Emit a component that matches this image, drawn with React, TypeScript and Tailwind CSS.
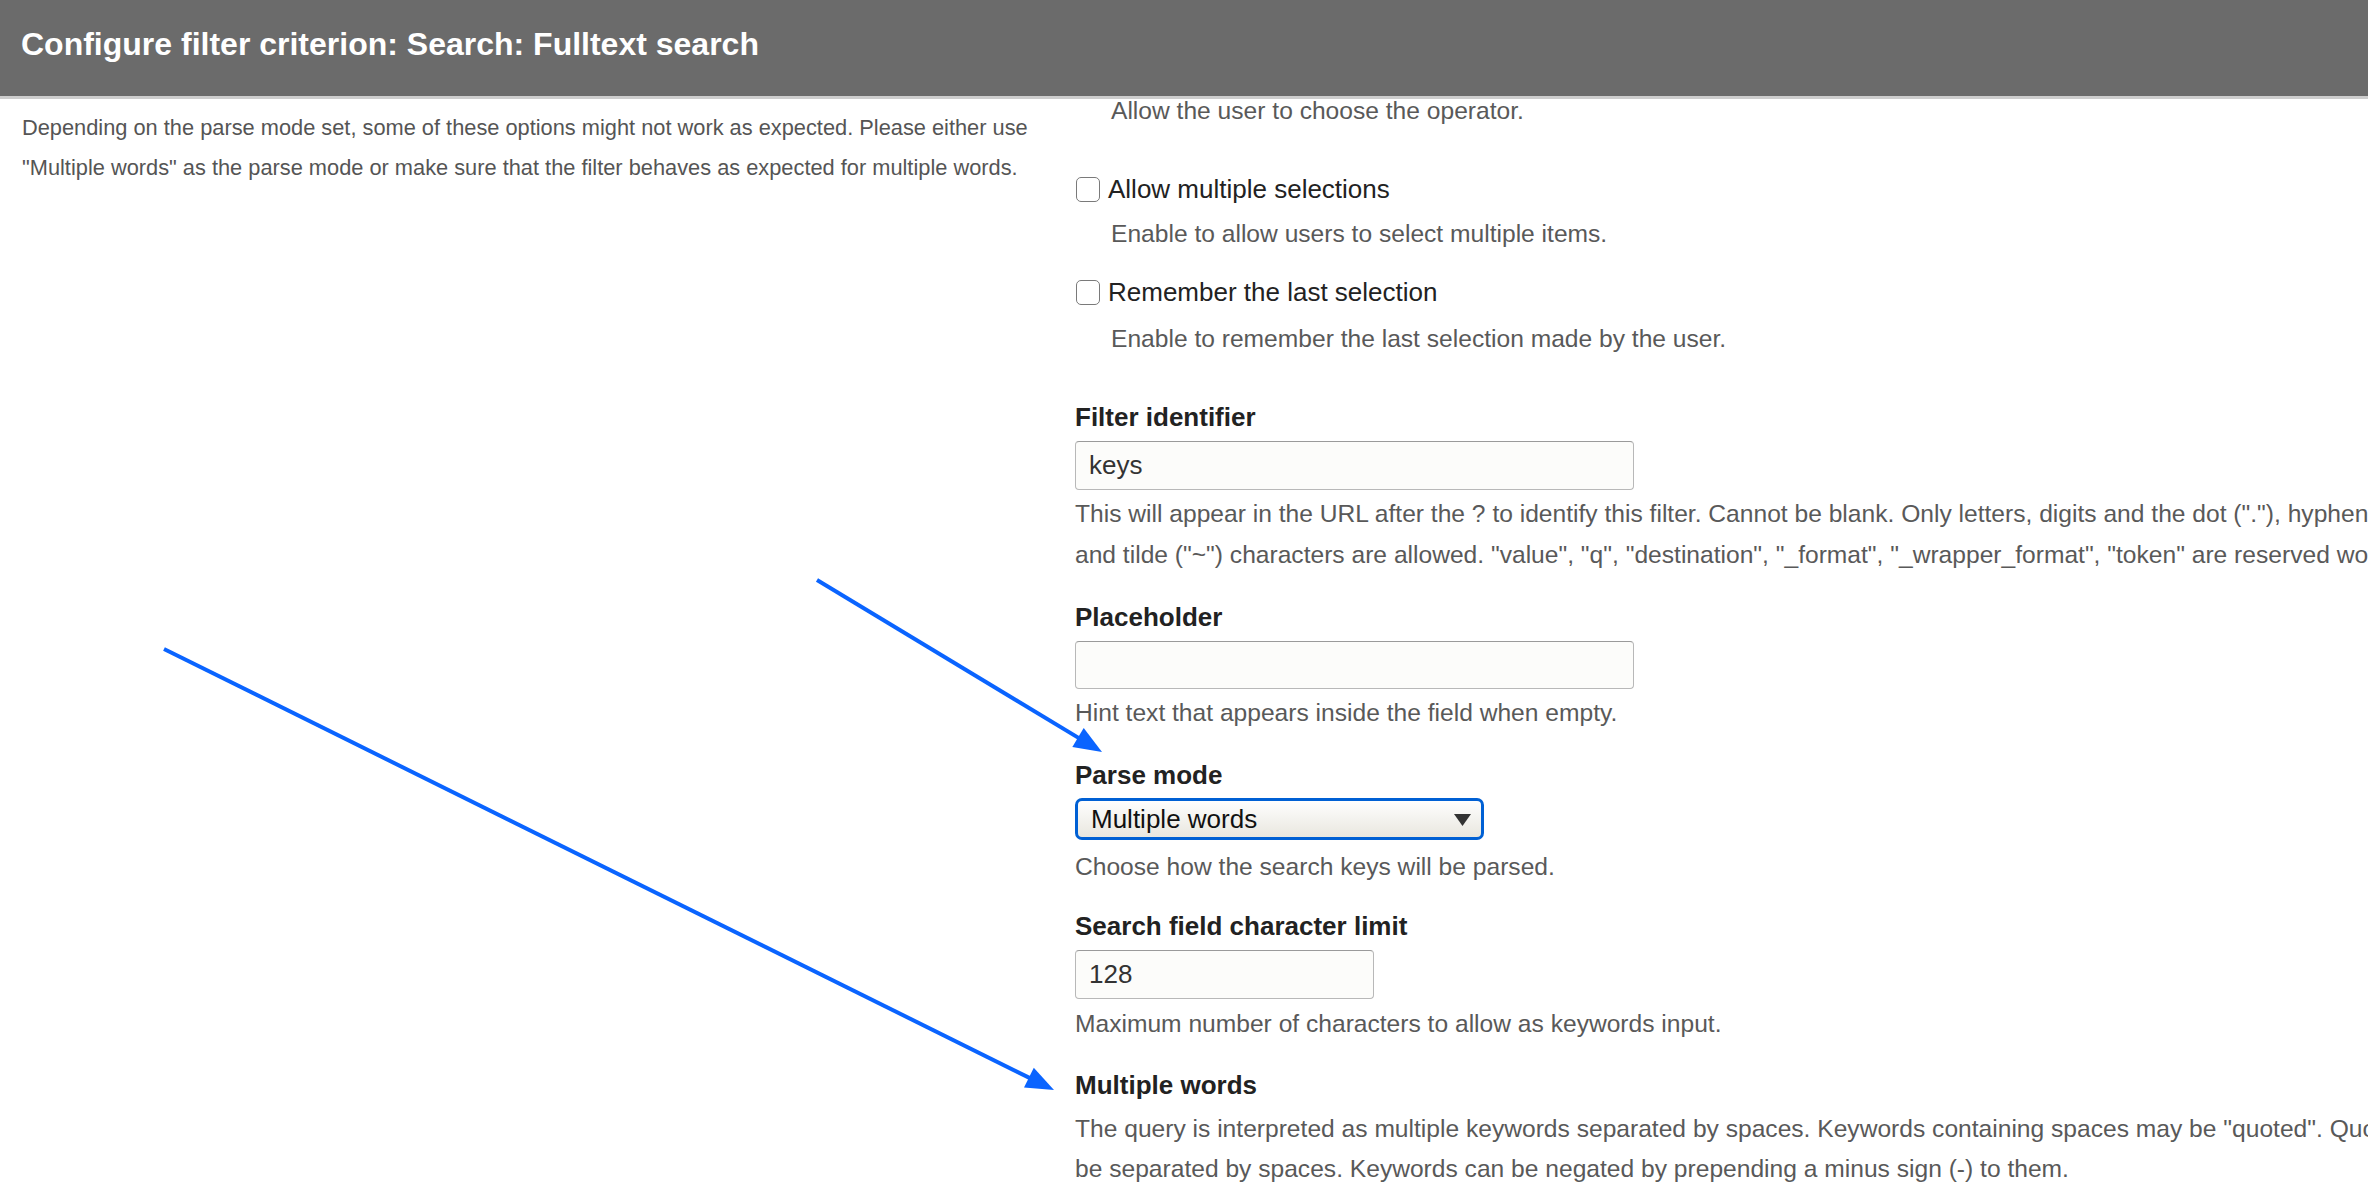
import React from 'react';

// Annotation arrow: line from start to tip, with a filled head
function Arrow({ x1, y1, x2, y2 }: { x1: number; y1: number; x2: number; y2: number }) {
  const dx = x2 - x1;
  const dy = y2 - y1;
  const len = Math.sqrt(dx * dx + dy * dy);
  const ux = dx / len;
  const uy = dy / len;
  const head = 28;
  const half = 11;
  const bx = x2 - ux * head;
  const by = y2 - uy * head;
  const pts = `${x2},${y2} ${bx - uy * half},${by + ux * half} ${bx + uy * half},${by - ux * half}`;
  return (
    <g>
      <line x1={x1} y1={y1} x2={bx + ux * 4} y2={by + uy * 4} stroke="#0a64ff" strokeWidth={4} />
      <polygon points={pts} fill="#0a64ff" />
    </g>
  );
}

function Checkbox({ label }: { label: string }) {
  return (
    <div className="flex h-[34px] items-center">
      <span className="ml-px h-[25px] w-[24px] rounded-[5px] border-[1.5px] border-[#7a7a7a] bg-white" />
      <span className="ml-[8px] text-[26px] leading-[34px] text-[#222]">{label}</span>
    </div>
  );
}

function Label({ children, className = '' }: { children: React.ReactNode; className?: string }) {
  return <div className={`text-[26px] font-bold leading-[34px] text-[#222] ${className}`}>{children}</div>;
}

function TextInput({ value, width, className = '' }: { value: string; width: string; className?: string }) {
  return (
    <input
      readOnly
      value={value}
      className={`block h-[49px] ${width} rounded-[4px] border border-[#b8b8b8] border-t-[#9a9a9a] bg-[#fcfcfa] px-[13px] text-[26px] text-[#333] outline-none ${className}`}
    />
  );
}

export default function App() {
  return (
    <div className="relative h-[1202px] w-[2368px] overflow-hidden bg-white font-['Liberation_Sans',Arial,sans-serif]">
      {/* Dialog title bar */}
      <div className="h-[96px] bg-[#6b6b6b] px-[21px] pt-[24px]">
        <h1 className="text-[32px] font-bold leading-[40px] text-white">
          Configure filter criterion: Search: Fulltext search
        </h1>
      </div>
      <div className="h-[3px] bg-[#cdcdcd]" />

      <div className="flex">
        {/* Left: help text */}
        <div className="w-[1075px] shrink-0 pl-[22px] pt-[9px]">
          <p className="text-[21.8px] leading-[40px] text-[#555]">
            Depending on the parse mode set, some of these options might not work as expected. Please either use
            <br />
            "Multiple words" as the parse mode or make sure that the filter behaves as expected for multiple words.
          </p>
        </div>

        {/* Right: form */}
        <div className="min-w-0 flex-1 whitespace-nowrap">
          <div className="pl-[36px] text-[24.6px] leading-[24px] text-[#595959]">Allow the user to choose the operator.</div>

          <div className="mt-[49px]">
            <Checkbox label="Allow multiple selections" />
          </div>
          <div className="mt-[7px] pl-[36px] text-[24.6px] leading-[41px] text-[#595959]">
            Enable to allow users to select multiple items.
          </div>

          <div className="mt-[21px]">
            <Checkbox label="Remember the last selection" />
          </div>
          <div className="mt-[9px] pl-[36px] text-[24.6px] leading-[41px] text-[#595959]">
            Enable to remember the last selection made by the user.
          </div>

          <Label className="mt-[41px]">Filter identifier</Label>
          <TextInput value="keys" width="w-[559px]" className="mt-[7px]" />
          <div className="mt-[3px] text-[24.6px] leading-[41px] text-[#595959]">
            <div>
              This will appear in the URL after the ? to identify this filter. Cannot be blank. Only letters, digits and the dot ("."), hyphen ("-"), underscore ("_")
            </div>
            <div>
              and tilde ("~") characters are allowed. "value", "q", "destination", "_format", "_wrapper_format", "token" are reserved words and cannot be used.
            </div>
          </div>

          <Label className="mt-[25px]">Placeholder</Label>
          <TextInput value="" width="w-[559px]" className="mt-[7px] !h-[48px]" />
          <div className="mt-[3px] text-[24.6px] leading-[41px] text-[#595959]">
            Hint text that appears inside the field when empty.
          </div>

          <Label className="mt-[25px]">Parse mode</Label>
          <div className="mt-[6px] flex h-[42px] w-[409px] items-center justify-between rounded-[7px] border-[3px] border-[#0060d4] bg-gradient-to-b from-[#fefefe] to-[#e9e7df] pl-[13px] pr-[10px]">
            <span className="text-[26px] text-[#111]">Multiple words</span>
            <svg width="17" height="12" viewBox="0 0 17 12" className="mt-[2px]">
              <polygon points="0,0 17,0 8.5,12" fill="#333" />
            </svg>
          </div>
          <div className="mt-[6px] text-[24.6px] leading-[41px] text-[#595959]">
            Choose how the search keys will be parsed.
          </div>

          <Label className="mt-[22px]">Search field character limit</Label>
          <TextInput value="128" width="w-[299px]" className="mt-[7px]" />
          <div className="mt-[4px] text-[24.6px] leading-[41px] text-[#595959]">
            Maximum number of characters to allow as keywords input.
          </div>

          <Label className="mt-[24px]">Multiple words</Label>
          <div className="mt-[7px] text-[24.6px] leading-[40px] text-[#595959]">
            <div>
              The query is interpreted as multiple keywords separated by spaces. Keywords containing spaces may be "quoted". Quoted keywords must still
            </div>
            <div>be separated by spaces. Keywords can be negated by prepending a minus sign (-) to them.</div>
          </div>
        </div>
      </div>

      {/* Annotation arrows drawn over the page */}
      <svg className="pointer-events-none absolute left-0 top-0" width="2368" height="1202">
        <Arrow x1={817} y1={580} x2={1102} y2={752} />
        <Arrow x1={164} y1={649} x2={1054} y2={1090} />
      </svg>
    </div>
  );
}
